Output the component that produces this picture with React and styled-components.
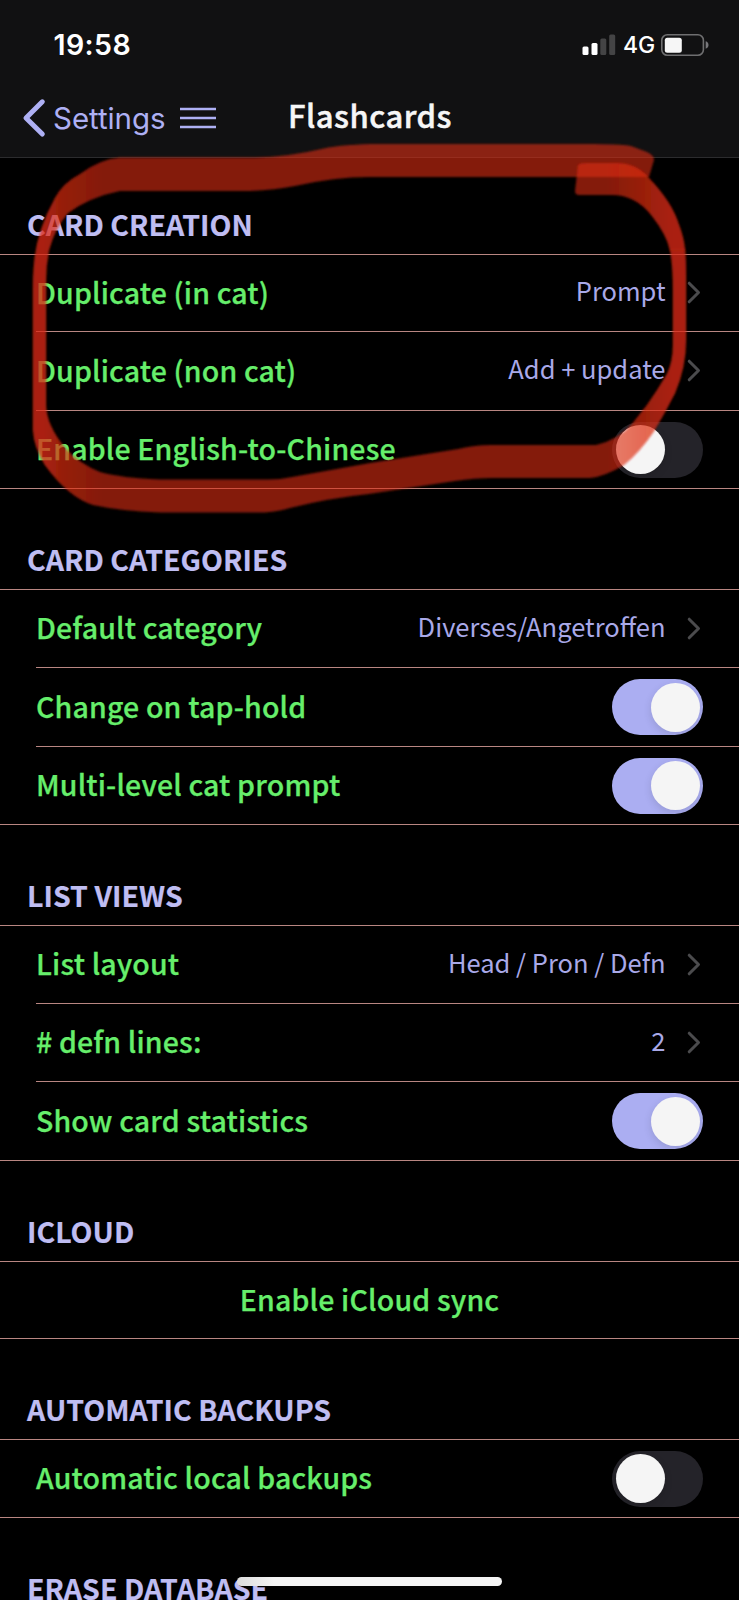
import React from "react";
import styled, { createGlobalStyle } from "styled-components";

const GlobalStyle = createGlobalStyle`
  * { box-sizing: border-box; }
  html, body { margin: 0; background: #000; }
`;

const Screen = styled.div`
  position: relative;
  width: 739px;
  height: 1600px;
  overflow: hidden;
  background: #000;
  color: #66ee6b;
  font-family: "Noto Sans CJK SC", "Noto Sans", sans-serif;
  white-space: nowrap;
`;

const TopArea = styled.header`
  height: 158px;
  background: #111112;
  border-bottom: 1px solid #2c2c2e;
`;

const StatusBar = styled.div`
  display: flex;
  align-items: center;
  justify-content: space-between;
  height: 89px;
  padding: 0 29px 0 53.5px;
  color: #fff;
  font-family: Inter, sans-serif;
`;

const Clock = styled.span`
  font-size: 28.5px;
  font-weight: 600;
  letter-spacing: 0.4px;
`;

const StatusIcons = styled.div`
  display: flex;
  align-items: center;
  gap: 7px;
`;

const Network = styled.span`
  width: 31px;
  font-size: 23px;
  font-weight: 500;
  letter-spacing: -0.2px;
`;

const NavBar = styled.div`
  display: grid;
  grid-template-columns: 288px auto;
  align-items: center;
  height: 58px;
`;

const BackGroup = styled.div`
  display: flex;
  align-items: center;
  padding-left: 22px;
  color: #aeb0f4;
`;

const BackLabel = styled.span`
  width: 112px;
  margin: 0 15px 0 7px;
  font: 400 29.5px/40px Inter, sans-serif;
  letter-spacing: -0.05px;
`;

const Title = styled.h1`
  margin: 0;
  padding-bottom: 6px;
  color: #f6f6f6;
  font-size: 31px;
  font-weight: 500;
  line-height: 40px;
  letter-spacing: 0.5px;
  -webkit-text-stroke: 0.5px currentColor;
`;

const SectionHeading = styled.h2`
  display: flex;
  align-items: flex-end;
  height: ${(p) => p.$height}px;
  margin: 0;
  padding: 0 27px 9px;
  color: #bfbdf2;
  font-size: 28.5px;
  font-weight: 700;
  line-height: 42px;
  letter-spacing: 0.03px;
  -webkit-text-stroke: 0.2px currentColor;
`;

const Group = styled.div`
  border-top: 1px solid #b98682;
`;

const Row = styled.div`
  display: flex;
  align-items: center;
  justify-content: ${(p) => (p.$centered ? "center" : "space-between")};
  height: ${(p) => p.$height}px;
  margin-left: ${(p) => (p.$last ? 0 : 36)}px;
  padding: 0 36px 0 ${(p) => (p.$last ? 36 : 0)}px;
  border-bottom: 1px solid #b98682;
`;

const Label = styled.span`
  padding-bottom: 3px;
  font-size: 28.5px;
  font-weight: 500;
  line-height: 42px;
  letter-spacing: 0.16px;
  -webkit-text-stroke: 0.25px currentColor;
`;

const ValueGroup = styled.span`
  display: flex;
  align-items: center;
  gap: 21.5px;
  padding-right: 2px;
`;

const Value = styled.span`
  color: #a9a9e8;
  font-size: 25.5px;
  font-weight: 400;
  line-height: 38px;
  padding-bottom: 6px;
`;

const Track = styled.span`
  display: flex;
  align-items: center;
  justify-content: ${(p) => (p.$on ? "flex-end" : "flex-start")};
  width: 91px;
  height: 56px;
  padding: 0 3.5px;
  border-radius: 28px;
  background: ${(p) => (p.$on ? "#abaef2" : "#242329")};
`;

const Knob = styled.span`
  width: 49px;
  height: 49px;
  border-radius: 50%;
  background: #f5f5f5;
  box-shadow: 0 3px 8px rgba(0, 0, 0, 0.12);
`;

const HomeIndicator = styled.div`
  position: absolute;
  left: 237px;
  top: 1577px;
  width: 265px;
  height: 9px;
  border-radius: 5px;
  background: linear-gradient(90deg, #dcdcdc, #f5f5f5 14%);
`;

const Overlay = styled.svg`
  position: absolute;
  left: 0;
  top: 0;
  pointer-events: none;
`;

const SignalIcon = () => (
  <svg width="34" height="22" viewBox="0 0 34 22">
    <rect x="0.5" y="12.5" width="6" height="8.5" rx="1.5" fill="#fff" />
    <rect x="9.5" y="9" width="6" height="12" rx="1.5" fill="#fff" />
    <rect x="18.3" y="4.5" width="6" height="16.5" rx="1.5" fill="#444445" />
    <rect x="27.2" y="0.5" width="6" height="20.5" rx="1.5" fill="#444445" />
  </svg>
);

const BatteryIcon = () => (
  <svg width="49" height="22" viewBox="0 0 49 22">
    <rect x="0.8" y="0.8" width="41.6" height="20.4" rx="5.5" fill="none" stroke="#6f6f70" strokeWidth="1.6" />
    <rect x="3.8" y="3.7" width="17" height="15" rx="2.5" fill="#f6f6f6" />
    <path d="M44.7 7.3c2 .6 2.8 2 2.8 3.7s-.8 3.100-2.800 3.700z" fill="#77777a" />
  </svg>
);

const BackIcon = () => (
  <svg width="24" height="40" viewBox="0 0 24 40">
    <path d="M20.300 3.800 4 20l16.300 16" fill="none" stroke="currentColor" strokeWidth="5" strokeLinecap="round" strokeLinejoin="round" />
  </svg>
);

const MenuIcon = () => (
  <svg width="36" height="24" viewBox="0 0 36 24">
    <path d="M0 3h36M0 12h36M0 21h36" stroke="currentColor" strokeWidth="2.600" />
  </svg>
);

const Disclosure = () => (
  <svg width="14" height="24" viewBox="0 0 14 24">
    <path d="M2.200 2.200 11.500 11.500l-9.300 9.300" fill="none" stroke="#4b4b4d" strokeWidth="3" strokeLinecap="round" strokeLinejoin="round" />
  </svg>
);

const Toggle = ({ on }) => (
  <Track $on={on} role="switch" aria-checked={on}>
    <Knob />
  </Track>
);

const LOOP =
  "M670 249.600Q673 265 673 290V345Q673 362 667 374Q657 391 647 405L632 424Q618 440 596 445H490Q475 445 458 449L370 463L292 477Q280 479.500 268 479.500H160Q122 478 100 472Q80 464 66 449Q46 425 46 405V280Q46 265 49 250Q55 228 68 213Q90 197 120 191H250Q275 190 295 186Q335 177 369 177H649L654 160Q654 155 647 152L631 146Q625 144.500 595 144H370Q340 145 326 148Q288 157 255 157.500H120Q100 159 80 174Q63 183 55 198Q36 233 34 265Q33 275 33 290V430Q34 447 45 465Q68 497 93 505Q120 511 160 512.500H265Q280 511 290 508Q330 498 369 494L455 481Q475 478 493 478H590Q604 477 624 465Q640 452 654 431Q665 413 675 393Q686 367 686 340V275Q686 260 685 249.600Z";
const TAIL =
  "M578 165Q580 163 586 163H618Q637 164 648 177Q672 202 679 225Q684 238 685 250.200H670Q667 235 652 216Q636 195 612 195H579Q575 195 575 191Z";

const Annotation = () => (
  <Overlay width="739" height="620" viewBox="0 0 739 620">
    <defs>
      <linearGradient id="pressure" gradientUnits="userSpaceOnUse" x1="0" y1="0" x2="739" y2="0">
        <stop offset="0.060" stopColor="#de2a14" stopOpacity="0.42" />
        <stop offset="0.085" stopColor="#de2a14" stopOpacity="0.2" />
        <stop offset="0.140" stopColor="#de2a14" stopOpacity="0" />
        <stop offset="0.820" stopColor="#de2a14" stopOpacity="0" />
        <stop offset="0.910" stopColor="#de2a14" stopOpacity="0.42" />
      </linearGradient>
      <clipPath id="heavy">
        <path d="M0 0H300V248H739V620H0Z" />
      </clipPath>
      <filter id="soft" filterUnits="userSpaceOnUse" x="0" y="120" width="739" height="420">
        <feGaussianBlur stdDeviation="0.9" />
      </filter>
    </defs>
    <path d={LOOP} fill="#de2a14" fillOpacity="0.595" filter="url(#soft)" />
    <g clipPath="url(#heavy)">
      <path d={LOOP} fill="url(#pressure)" filter="url(#soft)" />
    </g>
    <path d={TAIL} fill="#de2a14" fillOpacity="0.595" filter="url(#soft)" />
    <path d={TAIL} fill="url(#pressure)" filter="url(#soft)" />
  </Overlay>
);

const sections = [
  {
    title: "CARD CREATION",
    height: 96,
    rows: [
      { label: "Duplicate (in cat)", value: "Prompt", height: 77 },
      { label: "Duplicate (non cat)", value: "Add + update", height: 79 },
      { label: "Enable English-to-Chinese", on: false, height: 78 },
    ],
  },
  {
    title: "CARD CATEGORIES",
    height: 100,
    rows: [
      { label: "Default category", value: "Diverses/Angetroffen", height: 78 },
      { label: "Change on tap-hold", on: true, height: 79 },
      { label: "Multi-level cat prompt", on: true, height: 78 },
    ],
  },
  {
    title: "LIST VIEWS",
    height: 100,
    rows: [
      { label: "List layout", value: "Head / Pron / Defn", height: 78 },
      { label: "# defn lines:", value: "2", height: 78 },
      { label: "Show card statistics", on: true, height: 79 },
    ],
  },
  { title: "ICLOUD", height: 100, rows: [{ label: "Enable iCloud sync", centered: true, height: 77 }] },
  { title: "AUTOMATIC BACKUPS", height: 100, rows: [{ label: "Automatic local backups", on: false, height: 78 }] },
];

const SettingRow = ({ row, last }) => (
  <Row $height={row.height} $last={last} $centered={row.centered}>
    <Label>{row.label}</Label>
    {row.value && (
      <ValueGroup>
        <Value>{row.value}</Value>
        <Disclosure />
      </ValueGroup>
    )}
    {row.on !== undefined && <Toggle on={row.on} />}
  </Row>
);

export default function App() {
  return (
    <Screen>
      <GlobalStyle />
      <TopArea>
        <StatusBar>
          <Clock>19:58</Clock>
          <StatusIcons>
            <SignalIcon />
            <Network>4G</Network>
            <BatteryIcon />
          </StatusIcons>
        </StatusBar>
        <NavBar>
          <BackGroup>
            <BackIcon />
            <BackLabel>Settings</BackLabel>
            <MenuIcon />
          </BackGroup>
          <Title>Flashcards</Title>
        </NavBar>
      </TopArea>
      <main>
        {sections.map((s) => (
          <section key={s.title}>
            <SectionHeading $height={s.height}>{s.title}</SectionHeading>
            <Group>
              {s.rows.map((r, i) => (
                <SettingRow key={r.label} row={r} last={i === s.rows.length - 1} />
              ))}
            </Group>
          </section>
        ))}
        <SectionHeading $height={100}>ERASE DATABASE</SectionHeading>
      </main>
      <HomeIndicator />
      <Annotation />
    </Screen>
  );
}
